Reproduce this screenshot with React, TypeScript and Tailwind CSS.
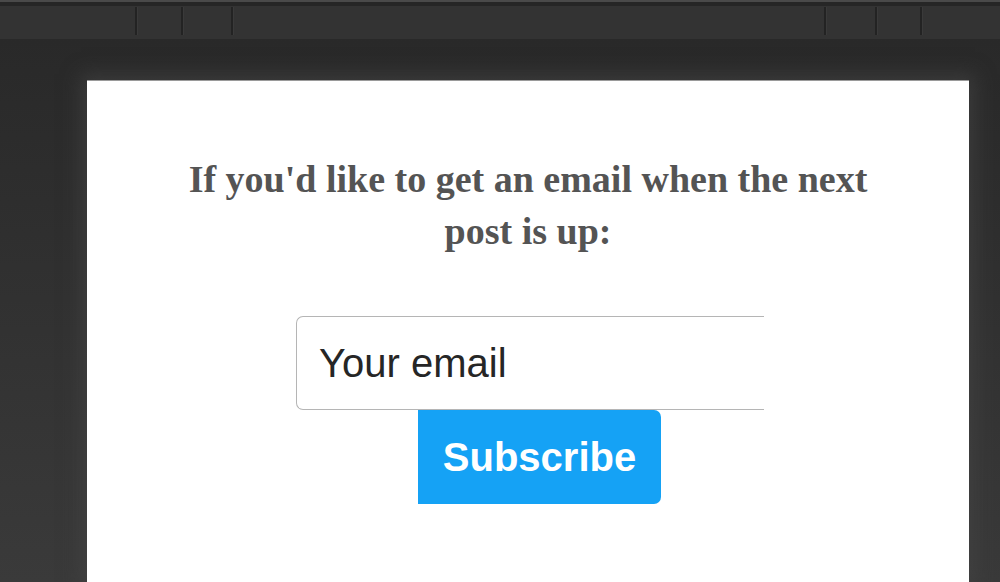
import React from 'react'

// thin dark divider inside the toolbar
const Sep = () => <div className="w-[3px] h-[28px] bg-[#232323] border-r border-[#3a3a3a]" />

export default function App() {
    return (
        <div className="w-[1000px] h-[582px] overflow-hidden bg-[#2b2b2b] flex flex-col">
            {/* toolbar */}
            <div className="h-[39px] shrink-0 bg-[#333333] border-t-[2px] border-[#4a4a4a] flex flex-col">
                <div className="h-[4px] bg-[#262626]" />
                <div className="flex-1 flex items-start pt-[1px]">
                    <div className="w-[135px]" />
                    <Sep />
                    <div className="w-[43px]" />
                    <Sep />
                    <div className="w-[47px]" />
                    <Sep />
                    <div className="flex-1" />
                    <Sep />
                    <div className="w-[48px]" />
                    <Sep />
                    <div className="w-[42px]" />
                    <Sep />
                    <div className="w-[77px]" />
                </div>
            </div>

            {/* page area */}
            <div className="flex-1 bg-gradient-to-b from-[#292929] to-[#3a3a3a] pt-[41px] pl-[87px] pr-[31px]">
                <div className="h-full bg-white border-t border-[#9a9a9a] shadow-[0_0_18px_6px_rgba(70,70,70,0.6)] flex flex-col items-center">
                    <h2 className="mt-[72px] w-[730px] text-center text-[#545454] font-bold text-[38px] leading-[52px] font-['Liberation_Serif',serif]">
                        If you'd like to get an email when the next post is up:
                    </h2>
                    <div className="mt-[59px] ml-[4px] w-[468px]">
                        <div className="h-[94px] flex items-center border border-r-0 border-[#b5b5b5] rounded-l-[7px] pl-[22px]">
                            <span className="text-[#262626] text-[40px] font-['Liberation_Sans',Arial,sans-serif]">Your email</span>
                        </div>
                        <button className="block w-[243px] h-[94px] ml-[122px] bg-[#15a2f5] rounded-r-[7px] text-white font-bold text-[40px] font-['Liberation_Sans',Arial,sans-serif]">
                            Subscribe
                        </button>
                    </div>
                </div>
            </div>
        </div>
    )
}
